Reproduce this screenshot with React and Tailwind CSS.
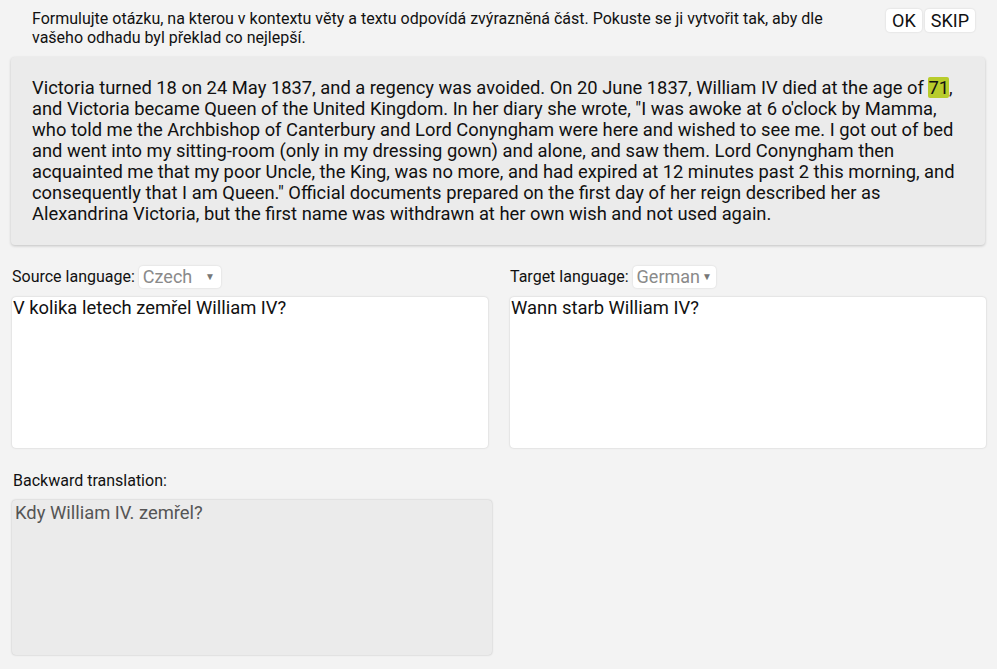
import React from 'react';

const LangSelect = ({ value, width }) => (
  <div className={`flex items-center justify-between bg-white rounded shadow-[0_0_2px_rgba(0,0,0,0.15)] h-[22px] pl-[4px] pr-[6px] ${width}`}>
    <span className="text-[18px] leading-none text-[#8a8a8a]">{value}</span>
    <span className="text-[10px] leading-none text-[#777] ml-[2px]">▼</span>
  </div>
);

const App = () => {
  return (
    <div className="min-h-[669px] bg-[#f3f3f3] text-[#111] font-['Roboto',sans-serif] px-[11px]">
      {/* Header */}
      <div className="flex justify-between items-start pt-[9px] pl-[21px] pr-[11px]">
        <p className="text-[16px] leading-[19px] w-[800px]">
          Formulujte otázku, na kterou v kontextu věty a textu odpovídá zvýrazněná část. Pokuste se ji vytvořit tak, aby dle vašeho odhadu byl překlad co nejlepší.
        </p>
        <div className="flex gap-[3px]">
          <button className="bg-white rounded shadow-[0_0_2px_rgba(0,0,0,0.15)] text-[18px] leading-[23px] px-[6px]">OK</button>
          <button className="bg-white rounded shadow-[0_0_2px_rgba(0,0,0,0.15)] text-[18px] leading-[23px] px-[6px]">SKIP</button>
        </div>
      </div>

      {/* Context panel */}
      <div className="mt-[10px] bg-[#ebebeb] rounded shadow-[0_1px_3px_rgba(0,0,0,0.2)] pl-[21px] pr-[19px] pt-[20px] pb-[21px] w-[974px]">
        <p className="text-[18.35px] leading-[21px]">
          Victoria turned 18 on 24 May 1837, and a regency was avoided. On 20 June 1837, William IV died at the age of{' '}
          <span className="bg-[#b8cc2b] rounded-[2px]">71</span>, and Victoria became Queen of the United Kingdom. In her diary she wrote, "I was awoke at 6 o'clock by Mamma, who told me the Archbishop of Canterbury and Lord Conyngham were here and wished to see me. I got out of bed and went into my sitting-room (only in my dressing gown) and alone, and saw them. Lord Conyngham then acquainted me that my poor Uncle, the King, was no more, and had expired at 12 minutes past 2 this morning, and consequently that I am Queen." Official documents prepared on the first day of her reign described her as Alexandrina Victoria, but the first name was withdrawn at her own wish and not used again.
        </p>
      </div>

      {/* Languages */}
      <div className="grid grid-cols-[476px_476px] gap-[22px] mt-[21px] pl-[1px]">
        <div>
          <div className="flex items-center gap-[4px] h-[22px] mb-[9px]">
            <span className="text-[16px]">Source language:</span>
            <LangSelect value="Czech" width="w-[82px]" />
          </div>
          <div className="bg-white rounded shadow-[0_0_2px_rgba(0,0,0,0.2)] h-[151px] px-[1px] text-[18.4px] leading-[22px]">
            V kolika letech zemřel William IV?
          </div>
        </div>
        <div>
          <div className="flex items-center gap-[4px] h-[22px] mb-[9px]">
            <span className="text-[16px]">Target language:</span>
            <LangSelect value="German" width="w-[83px]" />
          </div>
          <div className="bg-white rounded shadow-[0_0_2px_rgba(0,0,0,0.2)] h-[151px] px-[1px] text-[18.4px] leading-[22px]">
            Wann starb William IV?
          </div>
        </div>
      </div>

      {/* Backward translation */}
      <div className="mt-[23px] pl-[1px]">
        <div className="text-[16px] leading-[19px] pl-[1px]">Backward translation:</div>
        <div className="mt-[10px] w-[480px] h-[155px] bg-[#ebebeb] rounded shadow-[0_0_2px_rgba(0,0,0,0.25)] px-[3px] pt-[2px] text-[18.4px] leading-[22px] text-[#555]">
          Kdy William IV. zemřel?
        </div>
      </div>
    </div>
  );
};

export default App;
